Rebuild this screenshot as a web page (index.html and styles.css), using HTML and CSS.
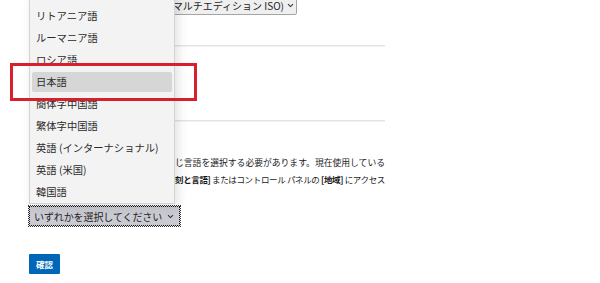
FILE: index.html
```html
<!DOCTYPE html>
<html lang="ja">
<head>
    <meta charset="UTF-8">
    <meta name="viewport" content="width=device-width, initial-scale=1.0">
    <title>言語の選択</title>
    <link rel="stylesheet" href="styles.css">
</head>
<body>
    <div id="page">
        <div class="select select-top">
            <span class="select-text">Windows 10 (マルチエディション ISO)</span>
            <svg class="chevron" width="7" height="5" viewBox="0 0 7 5"><path d="M1 1.2 L3.5 3.6 L6 1.2" fill="none" stroke="#333" stroke-width="1.1"/></svg>
        </div>
        <div class="rule"></div>
        <div class="section-gap">エディションの選択</div>
        <div class="rule"></div>
        <div class="heading">製品の言語の選択</div>
        <p class="note">
            <span class="line">インストール時には、同じ言語を選択する必要があります。現在使用している</span><br>
            <span class="line tight">言語を確認するには、PC 設定の <b>[時刻と言語]</b> またはコントロール パネルの <b>[地域]</b> にアクセス</span>
        </p>
        <div class="select select-lang">
            <span class="select-text">いずれかを選択してください</span>
            <svg class="chevron" width="7" height="5" viewBox="0 0 7 5"><path d="M1 1.2 L3.5 3.6 L6 1.2" fill="none" stroke="#333" stroke-width="1.1"/></svg>
        </div>
        <button class="confirm">確認</button>
    </div>

    <ul id="dropdown">
        <li>リトアニア語</li>
        <li>ルーマニア語</li>
        <li>ロシア語</li>
        <li class="active">日本語</li>
        <li>簡体字中国語</li>
        <li>繁体字中国語</li>
        <li>英語 (インターナショナル)</li>
        <li>英語 (米国)</li>
        <li>韓国語</li>
    </ul>

    <div id="highlight"></div>
</body>
</html>
```

FILE: styles.css
```css
body {
    margin: 0;
    font-family: "Noto Sans CJK JP", "Noto Sans", sans-serif;
    color: #222;
    background-color: #fff;
    position: relative;
    height: 283px;
    overflow: hidden;
}
#page {
    width: 356px;
    padding-left: 29px;
}
.select {
    display: flex;
    align-items: center;
    justify-content: flex-end;
    gap: 3px;
    box-sizing: border-box;
    white-space: nowrap;
    overflow: hidden;
}
.chevron {
    flex-shrink: 0;
}
.select-top {
    width: 268px;
    height: 20px;
    margin-top: -5px;
    padding-right: 2px;
    font-size: 10px;
    border: 1px solid #a5a5a5;
    border-radius: 2px;
    background-color: #efefef;
}
.rule {
    height: 1px;
    background-color: #e4e4e4;
    border-bottom: 1px solid #f2f2f2;
}
.select-top + .rule {
    margin-top: 30px;
}
.section-gap {
    height: 73px;
    font-size: 10px;
    color: #fff;
}
.heading {
    height: 32px;
    font-size: 10px;
    color: #fff;
}
.note {
    margin: 0;
    font-size: 8.8px;
    line-height: 17px;
    text-align: right;
    white-space: nowrap;
    color: #1a1a1a;
}
.note .tight {
    font-size: 8.5px;
    letter-spacing: -0.35px;
}
.note b {
    font-weight: bold;
}
.select-lang {
    width: 151px;
    height: 20px;
    margin-top: 18px;
    padding: 0 5px 0 4px;
    justify-content: space-between;
    gap: 2px;
    font-size: 10px;
    letter-spacing: -0.1px;
    border: 1px dotted #111;
    outline: 1px dotted #333;
    background-color: #cacad2;
}
.confirm {
    display: block;
    width: 31px;
    height: 20px;
    margin-top: 28px;
    padding: 0;
    border: none;
    border-radius: 1px;
    font-family: inherit;
    font-size: 8.5px;
    font-weight: bold;
    color: #fff;
    background-color: #0067b8;
}

/* open language list */
#dropdown {
    position: absolute;
    left: 29px;
    top: -6px;
    width: 146px;
    height: 210px;
    margin: 0;
    padding: 10px 0 0;
    box-sizing: border-box;
    list-style: none;
    background-color: #f3f3f3;
    border: 1px solid #d4d4d4;
    box-shadow: 3px 2px 10px rgba(0, 0, 0, 0.12);
}
#dropdown li {
    height: 22px;
    line-height: 22px;
    margin: 0 2px;
    padding-left: 4px;
    font-size: 10.3px;
    color: #2b2b2b;
    white-space: nowrap;
    border-radius: 2px;
}
#dropdown li.active {
    background-color: #d6d6d6;
    height: 20px;
    line-height: 20px;
    margin-top: 1px;
    margin-bottom: 1px;
}

/* annotation box */
#highlight {
    position: absolute;
    left: 10px;
    top: 63px;
    width: 181px;
    height: 32px;
    border: 3px solid #d8202c;
}
```
